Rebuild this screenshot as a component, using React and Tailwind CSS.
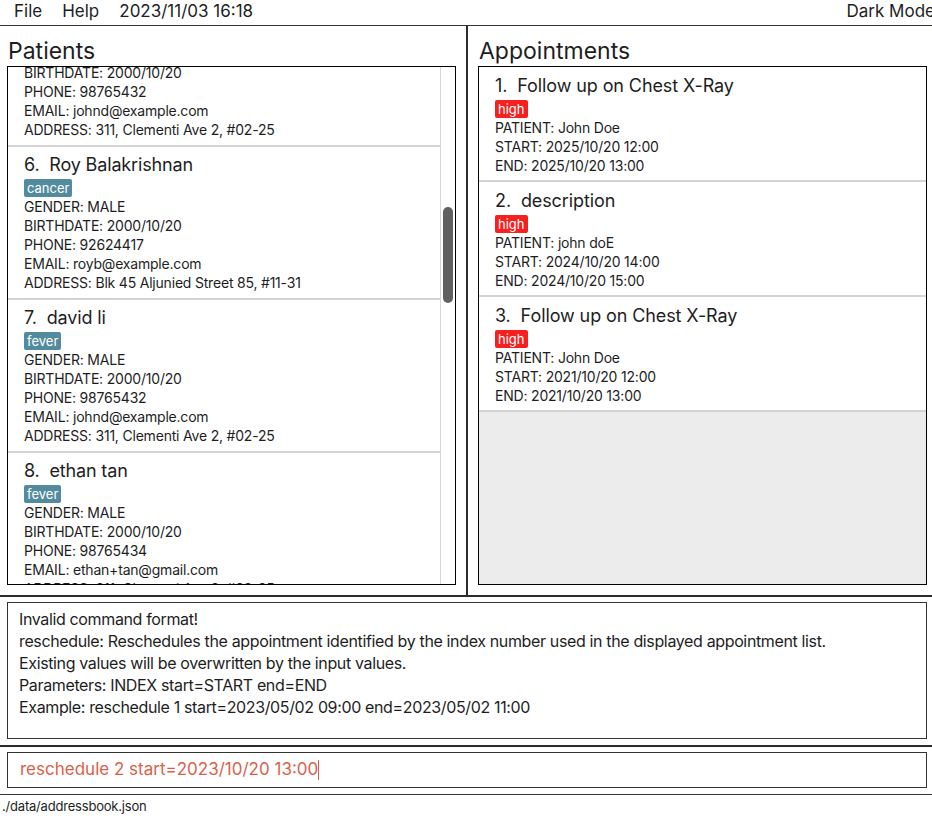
import React from 'react';

const patients = [
  { n: 5, name: 'John Doe', tag: 'fever', gender: 'MALE', birth: '2000/10/20', phone: '98765432', email: 'johnd@example.com', addr: '311, Clementi Ave 2, #02-25' },
  { n: 6, name: 'Roy Balakrishnan', tag: 'cancer', gender: 'MALE', birth: '2000/10/20', phone: '92624417', email: 'royb@example.com', addr: 'Blk 45 Aljunied Street 85, #11-31' },
  { n: 7, name: 'david li', tag: 'fever', gender: 'MALE', birth: '2000/10/20', phone: '98765432', email: 'johnd@example.com', addr: '311, Clementi Ave 2, #02-25' },
  { n: 8, name: 'ethan tan', tag: 'fever', gender: 'MALE', birth: '2000/10/20', phone: '98765434', email: 'ethan+tan@gmail.com', addr: '311, Clementi Ave 2, #02-25' },
];

const appointments = [
  { n: 1, title: 'Follow up on Chest X-Ray', patient: 'John Doe', start: '2025/10/20 12:00', end: '2025/10/20 13:00' },
  { n: 2, title: 'description', patient: 'john doE', start: '2024/10/20 14:00', end: '2024/10/20 15:00' },
  { n: 3, title: 'Follow up on Chest X-Ray', patient: 'John Doe', start: '2021/10/20 12:00', end: '2021/10/20 13:00' },
];

const PatientCard = ({ p }) => (
  <div className="bg-white border-b-2 border-[#d3d3d3] pl-[16px] pt-[6px] pb-[6px]">
    <div className="h-[24px] leading-[24px] text-[18px] tracking-[-0.15px] whitespace-pre">{`${p.n}.  ${p.name}`}</div>
    <div className="mt-[2px] h-[18px] flex">
      <span className="bg-[#528b9e] text-white text-[13px] leading-[18px] px-[3px] rounded-[2px]">{p.tag}</span>
    </div>
    <div className="text-[14px] leading-[19px] tracking-[-0.2px]">
      <div>GENDER: {p.gender}</div>
      <div>BIRTHDATE: {p.birth}</div>
      <div>PHONE: {p.phone}</div>
      <div>EMAIL: {p.email}</div>
      <div>ADDRESS: {p.addr}</div>
    </div>
  </div>
);

const AppointmentCard = ({ a }) => (
  <div className="bg-white border-b-2 border-[#d3d3d3] pl-[16px] pt-[7px] pb-[5px]">
    <div className="h-[24px] leading-[24px] text-[18px] tracking-[-0.1px] whitespace-pre">{`${a.n}.  ${a.title}`}</div>
    <div className="mt-[2px] h-[18px] flex">
      <span className="bg-[#f81f1f] text-white text-[13px] leading-[18px] px-[3px] rounded-[2px]">high</span>
    </div>
    <div className="text-[14px] leading-[19px] tracking-[-0.2px]">
      <div>PATIENT: {a.patient}</div>
      <div>START: {a.start}</div>
      <div>END: {a.end}</div>
    </div>
  </div>
);

export default function App() {
  return (
    <div className="w-[932px] h-[819px] flex flex-col bg-white overflow-hidden font-['Inter',sans-serif] text-[#1e1e1e]">
      {/* menu bar */}
      <div className="h-[26px] shrink-0 border-b border-[#333] flex items-center pb-[2px] text-[17px] pl-[14px] gap-[20px] whitespace-nowrap">
        <span>File</span>
        <span>Help</span>
        <span>2023/11/03 16:18</span>
        <span className="ml-auto mr-[-3px]">Dark Mode</span>
      </div>

      {/* lists */}
      <div className="h-[571px] shrink-0 flex border-b-2 border-[#2b2b2b]">
        <div className="w-[466px] flex flex-col pl-[7px] pr-[10px] pb-[10px]">
          <div className="h-[40px] pt-[10px] pl-[1px] text-[23px] leading-[30px]">Patients</div>
          <div className="flex-1 flex border border-black overflow-hidden">
            <div className="flex-1 overflow-hidden">
              <div className="-mt-[73px]">
                {patients.map((p) => <PatientCard key={p.n} p={p} />)}
              </div>
            </div>
            <div className="w-[15px] border-l border-[#d6d6d6] pl-[2px]">
              <div className="mt-[140px] w-[10px] h-[96px] rounded-full bg-[#616161]" />
            </div>
          </div>
        </div>
        <div className="w-[2px] bg-[#2b2b2b]" />
        <div className="flex-1 flex flex-col pl-[10px] pr-[5px] pb-[10px]">
          <div className="h-[40px] pt-[10px] pl-[1px] text-[23px] leading-[30px]">Appointments</div>
          <div className="flex-1 border border-black bg-[#ececec] overflow-hidden">
            {appointments.map((a) => <AppointmentCard key={a.n} a={a} />)}
          </div>
        </div>
      </div>

      {/* result display */}
      <div className="h-[150px] shrink-0 pt-[5px] pb-[6px] pl-[7px] pr-[5px] border-b-2 border-[#2b2b2b]">
        <div className="h-[137px] border border-[#333] pl-[11px] pt-[5px] text-[16px] leading-[22px] tracking-[-0.36px]">
          <div>Invalid command format!</div>
          <div>reschedule: Reschedules the appointment identified by the index number used in the displayed appointment list.</div>
          <div>Existing values will be overwritten by the input values.</div>
          <div>Parameters: INDEX start=START end=END</div>
          <div>Example: reschedule 1 start=2023/05/02 09:00 end=2023/05/02 11:00</div>
        </div>
      </div>

      {/* command box */}
      <div className="h-[48px] shrink-0 pt-[5px] pb-[6px] pl-[7px] pr-[5px] border-b border-[#333]">
        <div className="h-[36px] border border-[#333] pl-[12px] flex items-center text-[17px] text-[#dc5f4c]">
          <span className="whitespace-pre">reschedule 2 start=2023/10/20 13:00</span>
          <span className="w-px h-[20px] bg-[#dc5f4c]" />
        </div>
      </div>

      {/* status bar */}
      <div className="flex-1 flex items-center pl-[2px] text-[13px] tracking-[-0.2px]">./data/addressbook.json</div>
    </div>
  );
}
